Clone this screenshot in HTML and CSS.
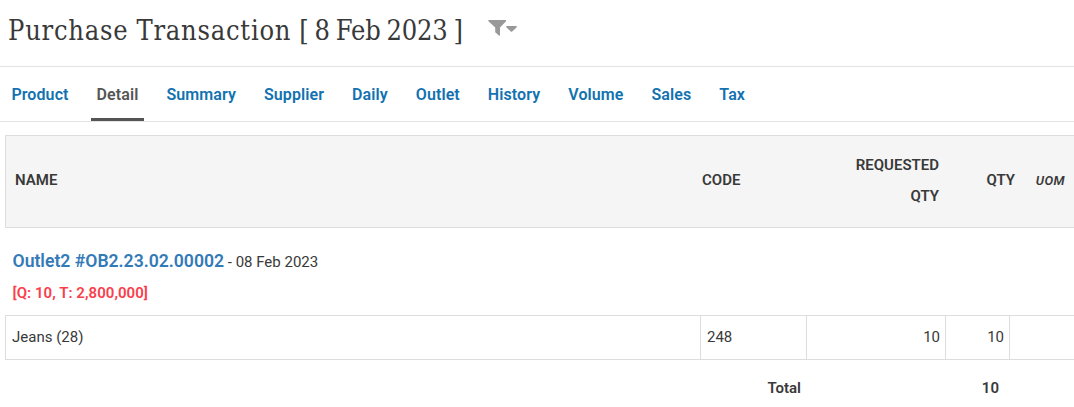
FILE: index.html
```html
<!DOCTYPE html>
<html lang="en">
<head>
<meta charset="utf-8">
<title>Purchase Transaction</title>
<link rel="stylesheet" href="styles.css">
</head>
<body>
<header class="page-header">
  <h1 class="title">Purchase Transaction <span class="period">[ 8 Feb 2023 ]</span></h1>
  <svg class="filter" width="30" height="18" viewBox="0 0 30 18" fill="#999"><path d="M.7 1H17.5Q18.6 1.5 17.8 2.4L12 8.4V16.2Q11.4 17 10.6 16.3L7.2 13.3V8.4L.7 2.4Q-.2 1.5.7 1ZM18.6 7H28.4Q29.2 7.6 28.5 8.4L24.2 12.4Q23.5 13 22.8 12.4L18.5 8.4Q17.8 7.6 18.6 7Z"/></svg>
</header>
<nav class="tabs">
  <a class="tab">Product</a>
  <a class="tab active">Detail</a>
  <a class="tab">Summary</a>
  <a class="tab">Supplier</a>
  <a class="tab">Daily</a>
  <a class="tab">Outlet</a>
  <a class="tab">History</a>
  <a class="tab">Volume</a>
  <a class="tab">Sales</a>
  <a class="tab">Tax</a>
</nav>
<main class="report">
  <div class="row head">
    <div>NAME</div>
    <div>CODE</div>
    <div class="num">REQUESTED QTY</div>
    <div class="num">QTY</div>
    <div class="num uom">UOM</div>
  </div>
  <section class="group">
    <div class="order"><a class="order-link">Outlet2 #OB2.23.02.00002</a> - 08 Feb 2023</div>
    <div class="order-sum">[Q: 10, T: 2,800,000]</div>
  </section>
  <div class="row item">
    <div>Jeans (28)</div>
    <div>248</div>
    <div class="num">10</div>
    <div class="num">10</div>
    <div></div>
  </div>
  <div class="row total">
    <div class="total-label num">Total</div>
    <div></div>
    <div class="num">10</div>
    <div></div>
  </div>
</main>
</body>
</html>
```
FILE: styles.css
```css
* { box-sizing: border-box; }
body {
  margin: 0;
  height: 407px;
  overflow: hidden;
  background: #fff;
  color: #393939;
  font: 15px/31px Roboto, sans-serif;
}
.page-header {
  display: flex;
  height: 67px;
  padding-left: 8px;
  border-bottom: 1px solid #e3e3e3;
}
.title {
  width: 480px;
  margin: 0;
  font: 400 27px/62px "Roboto Slab", "DejaVu Serif Condensed", "DejaVu Serif", serif;
  font-stretch: condensed;
  letter-spacing: .78px;
  word-spacing: -.5px;
  white-space: nowrap;
}
.period {
  letter-spacing: -.2px;
  word-spacing: -1.5px;
}
.filter { margin-top: 19px; }
.tabs {
  display: flex;
  gap: 16px;
  height: 55px;
  padding-left: 5px;
  border-bottom: 1px solid #e3e3e3;
}
.tab {
  height: 54px;
  padding: 0 6px;
  color: #1272b0;
  font-size: 16px;
  font-weight: 600;
  letter-spacing: .09px;
  line-height: 55px;
}
.tab:first-child { padding-left: 6.4px; }
.tab.active {
  color: #555;
  border-bottom: 3px solid #555;
}
.report {
  width: 1085px;
  margin: 13px 0 0 5px;
}
.row {
  display: grid;
  grid-template-columns: 695px 106px 139px 64px 1fr;
}
.num { text-align: right; }
.head {
  height: 93px;
  align-items: center;
  padding-bottom: 2px;
  background: #f5f5f5;
  border: 1px solid #ddd;
  font-weight: 600;
}
.head > div { padding: 0 6px 0 9px; }
.head > div:nth-child(2) { padding-left: 1px; }
.head > div:nth-child(3) { padding-left: 40px; padding-right: 7px; }
.head > div:nth-child(4) { padding: 0; transform: translateX(5px); }
.head > .uom {
  padding-right: 24px;
  font-size: 13px;
  font-style: italic;
  letter-spacing: .4px;
}
.group {
  height: 87px;
  padding: 18px 0 0 7.5px;
}
.order-link {
  color: #337ab7;
  font-size: 17.6px;
  font-weight: 600;
}
.order-sum {
  color: #fa3e4c;
  font-weight: 600;
  letter-spacing: .05px;
}
.item {
  height: 45px;
  border: 1px solid #ddd;
  line-height: 43px;
}
.item > div {
  padding: 0 5px 0 6px;
  border-right: 1px solid #dcdce2;
}
.total {
  font-weight: 600;
  line-height: 56px;
}
.total-label { grid-column: span 2; padding-right: 5px; }
.total > .num:nth-child(3) { padding-right: 10px; }
.total > .total-label { transform: none; }
```
